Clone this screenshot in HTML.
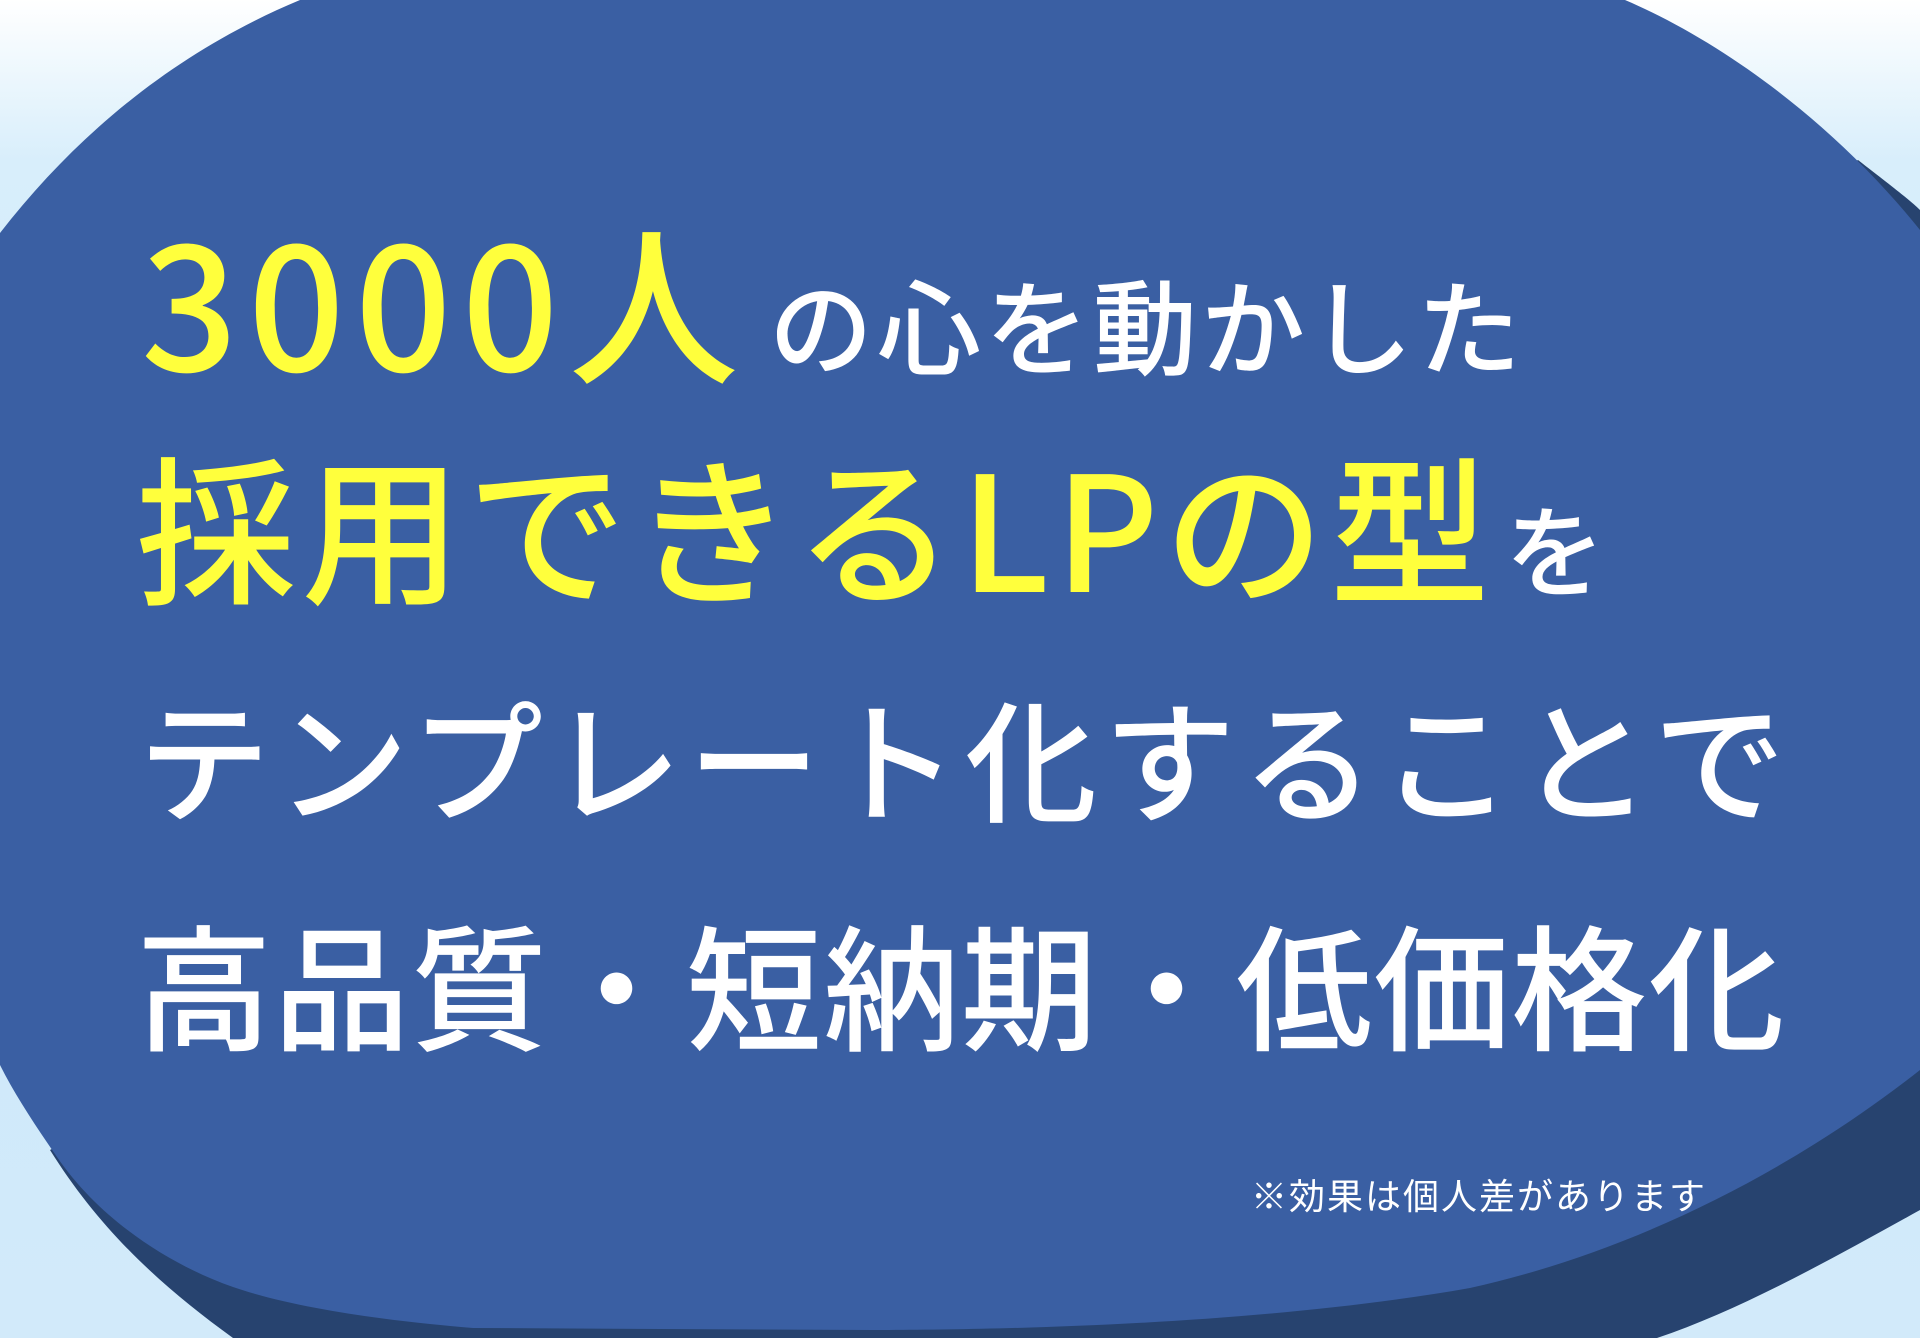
<!DOCTYPE html>
<html><head><meta charset="utf-8"><style>
html,body{margin:0;padding:0}
body{width:1920px;height:1338px;position:relative;overflow:hidden;font-family:"Liberation Sans","Noto Sans CJK JP",sans-serif;}
.t{position:absolute;white-space:nowrap;line-height:1;font-family:"Noto Sans CJK JP","Liberation Sans",sans-serif;font-weight:500}
.y{color:#ffff3c}.w{color:#fff}
</style></head><body>
<svg width="1920" height="1338" style="position:absolute;left:0;top:0">
<defs>
<linearGradient id="bg" x1="0" y1="0" x2="0" y2="1">
<stop offset="0" stop-color="#ffffff"/>
<stop offset="0.12" stop-color="#d8eefb"/>
<stop offset="0.5" stop-color="#cde8f9"/>
<stop offset="1" stop-color="#d2eafa"/>
</linearGradient>
</defs>
<rect width="1920" height="1338" fill="url(#bg)"/>
<path d="M1858,160 C1890,185 1910,200 1920,210 L1920,1210 C1830,1260 1740,1310 1657,1338 L233,1338 C160,1285 100,1230 50,1150 Z" fill="#27436f"/>
<path d="M300,0 L1625,0 C1730,45 1840,130 1920,230 L1920,1070 C1780,1180 1620,1255 1470,1288 C1260,1325 1000,1330 870,1330 L473,1328 C400,1322 300,1310 233,1287 C170,1265 100,1220 57,1157 C35,1125 15,1095 0,1065 L0,233 C80,130 180,50 300,0 Z" fill="#3a5fa3"/>
</svg>
<div class="t y" style="left:141px;top:212px;font-size:170px;letter-spacing:10px">3000人</div>
<div class="t w" style="left:769px;top:270px;font-size:104px;letter-spacing:4px">の心を動かした</div>
<div class="t y" style="left:136px;top:443px;font-size:160px;letter-spacing:5.5px">採用できるLPの型</div>
<div class="t w" style="left:1505px;top:496px;font-size:100px">を</div>
<div class="t w" style="left:138px;top:690px;font-size:132px;letter-spacing:6.5px">テンプレート化することで</div>
<div class="t w" style="left:136px;top:914px;font-size:136px;letter-spacing:1.5px">高品質・短納期・低価格化</div>
<div class="t w" style="left:1251px;top:1176px;font-size:36px;letter-spacing:2px;font-weight:400">※効果は個人差があります</div>
</body></html>
